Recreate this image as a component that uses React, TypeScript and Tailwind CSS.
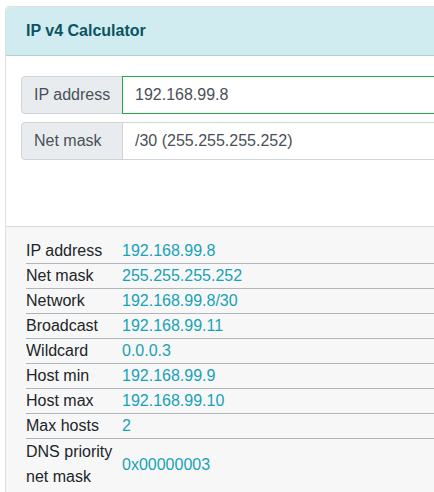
import { FC } from "react"

const ROWS: { label: string; value: string }[] = [
  { label: "IP address", value: "192.168.99.8" },
  { label: "Net mask", value: "255.255.255.252" },
  { label: "Network", value: "192.168.99.8/30" },
  { label: "Broadcast", value: "192.168.99.11" },
  { label: "Wildcard", value: "0.0.0.3" },
  { label: "Host min", value: "192.168.99.9" },
  { label: "Host max", value: "192.168.99.10" },
  { label: "Max hosts", value: "2" },
  { label: "DNS priority net mask", value: "0x00000003" },
]

const InputRow: FC<{ label: string; value: string; valid?: boolean }> = ({ label, value, valid }) => (
  <div className="flex h-[38px]">
    <div className="w-[102px] shrink-0 flex items-center px-3 whitespace-nowrap bg-[#e9ecef] border border-[#ced4da] rounded-l text-[#495057]">
      {label}
    </div>
    <input
      readOnly
      value={value}
      className={
        valid
          ? "flex-1 -ml-px px-3 border border-[#28a745] text-[#495057] bg-white outline-none"
          : "flex-1 -ml-px px-3 border border-[#ced4da] text-[#495057] bg-white outline-none"
      }
    />
  </div>
)

export default function App() {
  return (
    <div className="w-[434px] h-[492px] overflow-hidden bg-white pt-[6px] pl-[5px] font-['Liberation_Sans',Arial,sans-serif] text-base leading-6 text-[#212529]">
      <div className="w-[520px] border border-black/[.125] rounded">
        <div className="h-[49px] flex items-center px-5 bg-[#d1ecf1] border-b border-black/[.125] rounded-t">
          <h1 className="font-bold text-[#0c5460]">IP v4 Calculator</h1>
        </div>

        <div className="pt-5 px-[15px] pb-[66px] flex flex-col gap-2">
          <InputRow label="IP address" value="192.168.99.8" valid />
          <InputRow label="Net mask" value="/30 (255.255.255.252)" />
        </div>

        <div className="bg-[#f7f7f7] border-t border-black/[.125] pt-3 pb-3 px-5">
          {ROWS.map((row, i) => (
            <div
              key={row.label}
              className={
                i < ROWS.length - 1
                  ? "grid grid-cols-[96px_1fr] items-center border-b border-[#adb5bd]"
                  : "grid grid-cols-[96px_1fr] items-center leading-[25px]"
              }
            >
              <span className="pr-2">{row.label}</span>
              <span className="text-[#17a2b8]">{row.value}</span>
            </div>
          ))}
        </div>
      </div>
    </div>
  )
}
